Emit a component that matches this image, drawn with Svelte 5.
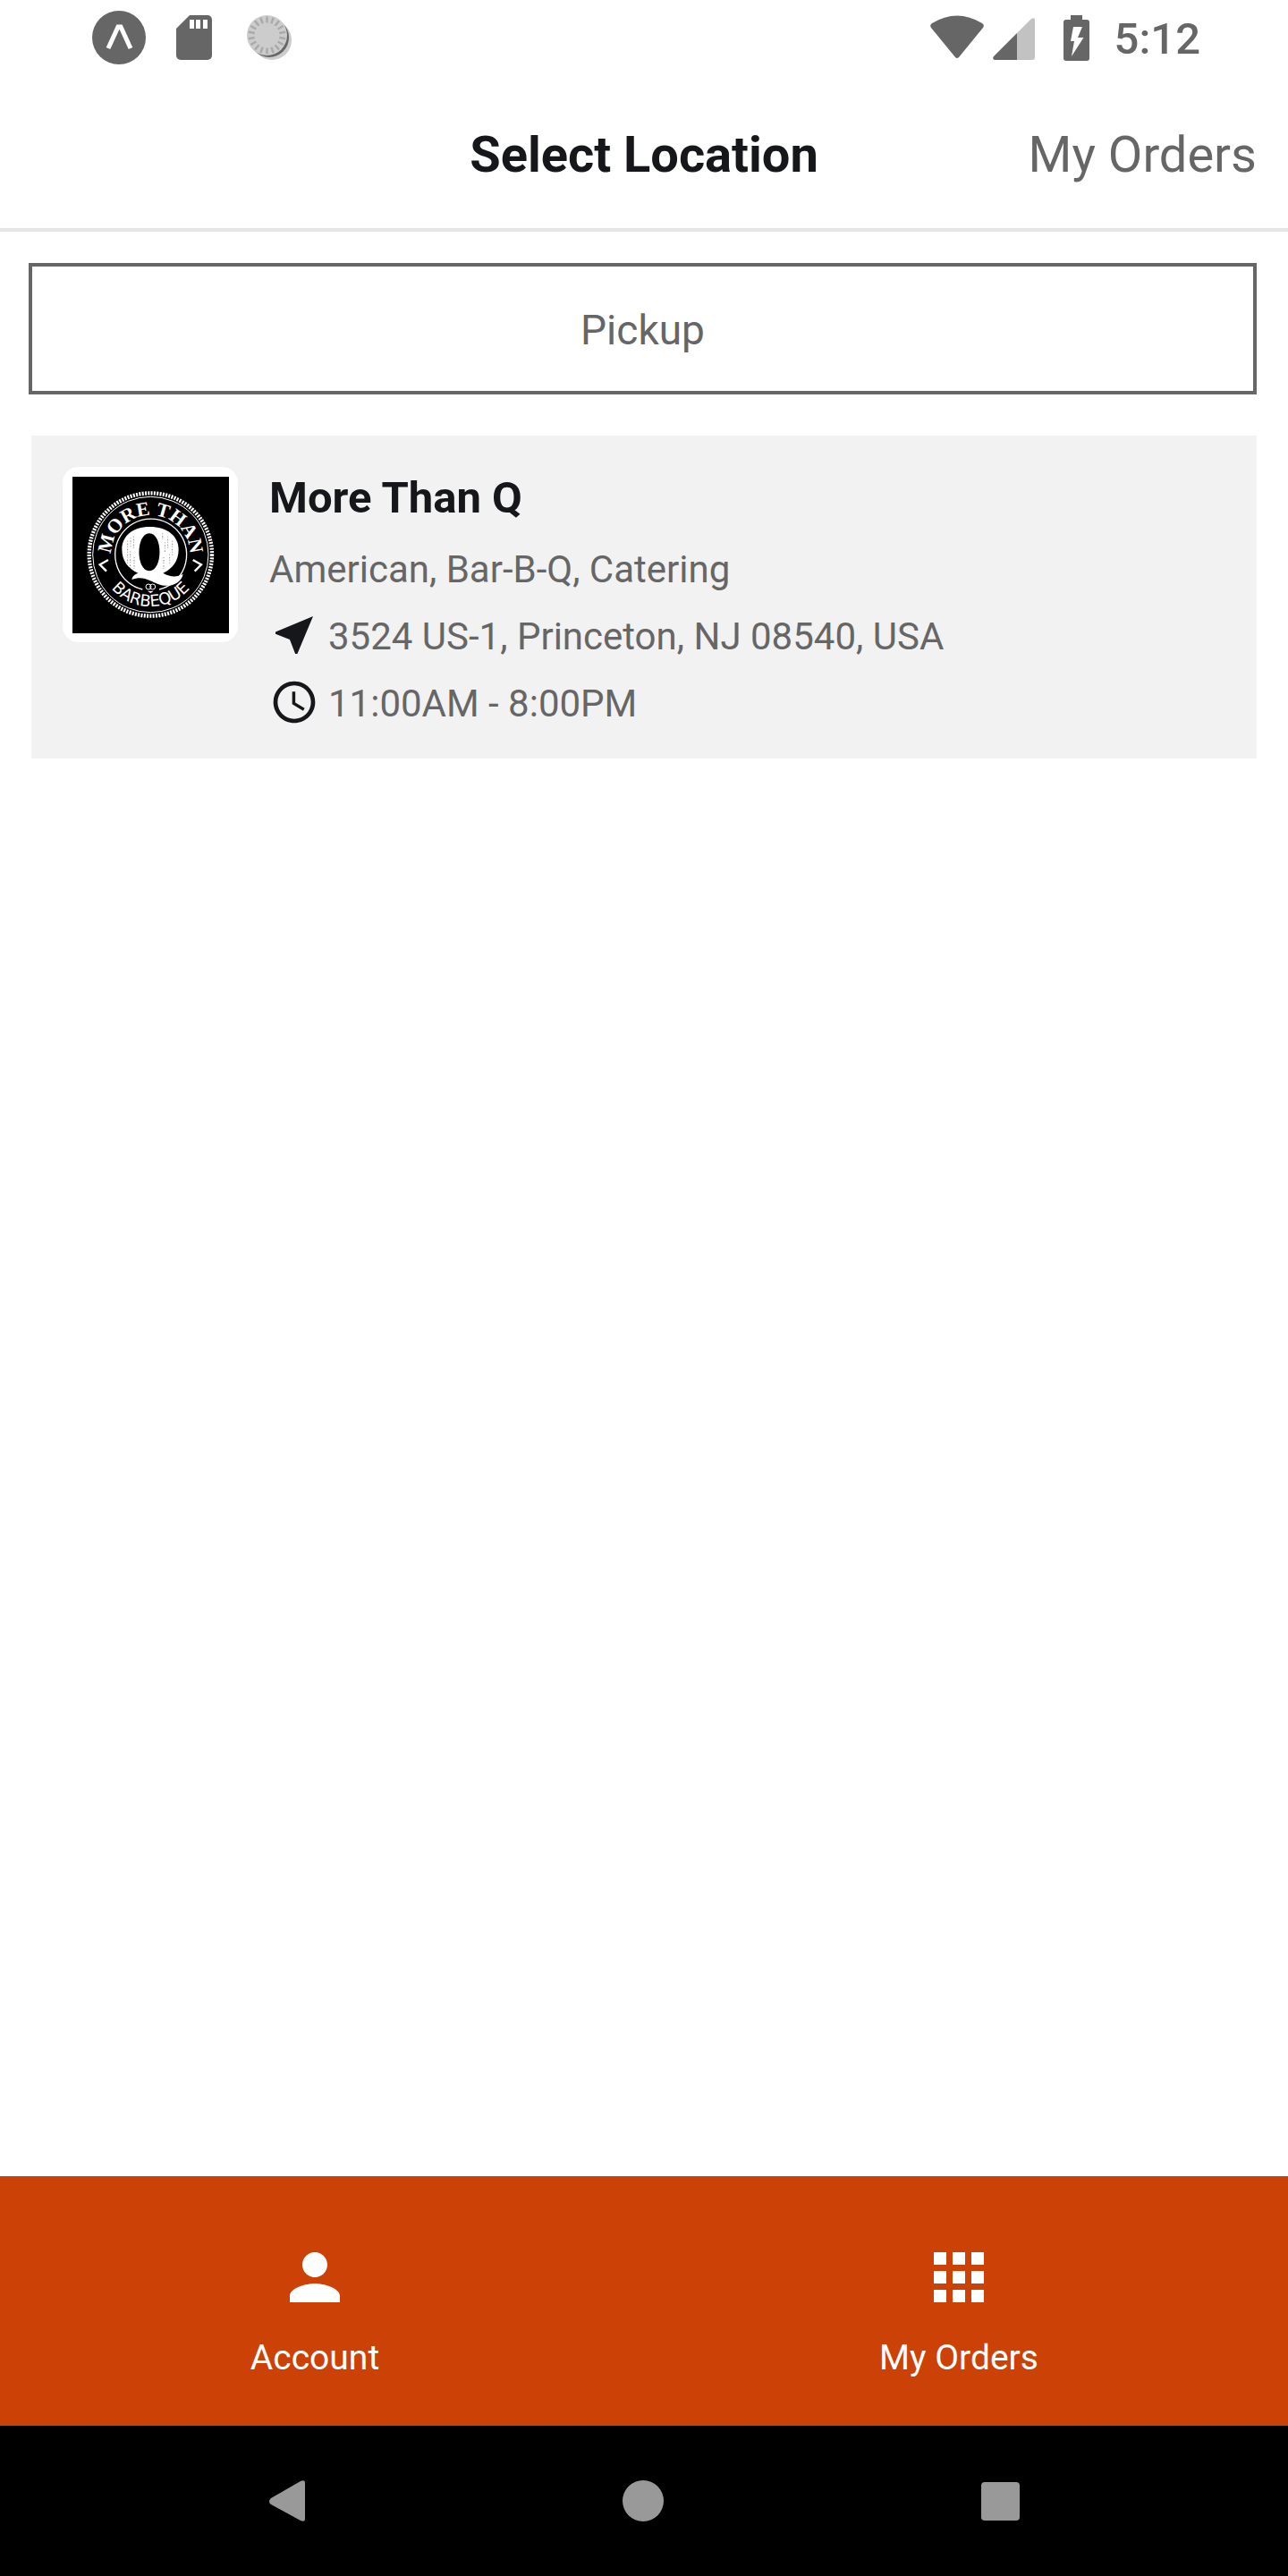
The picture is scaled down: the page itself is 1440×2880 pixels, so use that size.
<script lang="ts">
  interface Tab {
    label: string;
    icon: string;
  }

  const location = {
    name: "More Than Q",
    cuisines: ["American", "Bar-B-Q", "Catering"],
    address: "3524 US-1, Princeton, NJ 08540, USA",
    hours: "11:00AM - 8:00PM",
  };

  const tabs: Tab[] = [
    {
      label: "Account",
      icon: "M12 12c2.2 0 4-1.8 4-4s-1.8-4-4-4-4 1.8-4 4 1.8 4 4 4zm0 2c-2.67 0-8 1.34-8 4v2h16v-2c0-2.66-5.33-4-8-4z",
    },
    {
      label: "My Orders",
      icon: "M4 8h4V4H4zm6 12h4v-4h-4zm-6 0h4v-4H4zm0-6h4v-4H4zm6 0h4v-4h-4zm6-10v4h4V4zm-6 4h4V4h-4zm6 6h4v-4h-4zm0 6h4v-4h-4z",
    },
  ];

  const ticks = Array.from({ length: 18 }, (_, i) => i * 20);
</script>

<div class="screen">
  <div class="status">
    <div class="group">
      <svg width="60" height="60" viewBox="0 0 60 60">
        <circle cx="30" cy="30" r="30" fill="#666" />
        <path d="M18 42L29 18h3L43 42" fill="none" stroke="#fff" stroke-width="5" />
      </svg>
      <svg class="sd" width="40" height="50" viewBox="0 0 40 50">
        <path fill="#666" d="M15 0h20a5 5 0 0 1 5 5v40a5 5 0 0 1-5 5H5a5 5 0 0 1-5-5V15z" />
        <path fill="#fff" d="M15 5h5v10h-5zM22 5h5v10h-5zM30 5h5v10h-5z" />
      </svg>
      <svg width="50" height="50" viewBox="0 0 50 50">
        <circle cx="28" cy="28" r="22" fill="#ccc" />
        <circle cx="25" cy="25" r="22" fill="#666" />
        <circle cx="22.5" cy="22.5" r="22.5" fill="#ccc" />
        {#each ticks as angle}
          <path
            d="M22.5 1.5v7"
            stroke="#aaa"
            stroke-width="2.5"
            transform="rotate({angle} 22.5 22.5)"
          />
        {/each}
      </svg>
    </div>
    <div class="group">
      <svg width="60" height="50" viewBox="0 0 60 50">
        <path fill="#666" d="M2 9Q30-8 58 9q3 2 1 5L32 47q-2 2-4 0L1 14q-2-3 1-5z" />
      </svg>
      <svg class="signal" width="47" height="50" viewBox="0 0 47 50">
        <path fill="#c2c2c2" d="M27 20L43 4q4-2 4 1v42q0 3-3 3H27z" />
        <path fill="#666" d="M27 20v30H2q-3-1-1-4z" />
      </svg>
      <svg class="battery" width="29" height="51" viewBox="0 0 29 51">
        <path fill="#666" d="M8 0h13v5h5q3 0 3 3v40q0 3-3 3H3q-3 0-3-3V8q0-3 3-3h5z" />
        <path fill="#fff" d="M11 13h10l-5 12h6.5L9 46l3-17H8z" />
      </svg>
      <time>5:12</time>
    </div>
  </div>

  <header>
    <h1>Select Location</h1>
    <a href="#orders">My Orders</a>
  </header>

  <main>
    <button class="pickup">Pickup</button>

    <article>
      <div class="logo">
        <svg viewBox="0 0 525 525" role="img" aria-label={location.name}>
          <defs>
            <path id="arc-top" d="M130 261a132 132 0 0 1 264 0" />
            <path id="arc-bottom" d="M88 261a174 174 0 0 0 348 0" />
          </defs>
          <rect width="525" height="525" fill="#000" />
          <g fill="none" stroke="#fff">
            <circle cx="262" cy="261" r="206" stroke-width="13" stroke-dasharray="6 4" />
            <circle cx="262" cy="261" r="194" stroke-width="3" />
            <path d="M235 378a120 120 0 1 1 56 0" stroke-width="4" />
            <path d="M120 279l-28 16 22 22M404 279l28 16-22 22" stroke-width="7" />
            <circle cx="255" cy="369" r="9" stroke-width="3" />
            <circle cx="269" cy="369" r="9" stroke-width="3" />
          </g>
          <path fill="#fff" d="M252 383h20l-10 8z" />
          <path
            fill="#fff"
            fill-rule="evenodd"
            d="M259 168c58 0 97 30 97 76 0 38-20 65-52 79 25 14 45 15 67 3-5 29-42 49-82 35-26-9-50-31-90-16 2-12 11-18 21-22-33-13-54-42-54-79 0-46 37-76 93-76zm-1 22c-46 0-46 126 0 126s46-126 0-126z"
          />
          <path
            d="M185 215v75M195 205v30M194 250v55M205 200v45M207 270v38M302 190v20M310 220v32M306 270v38M320 200v40M326 260v30M335 215v48"
            stroke="#555"
            stroke-width="2"
            stroke-dasharray="3 6 5 4"
          />
          <text class="arc-name">
            <textPath href="#arc-top" startOffset="50%" text-anchor="middle">MORE THAN</textPath>
          </text>
          <text class="arc-kind">
            <textPath href="#arc-bottom" startOffset="50%" text-anchor="middle">BARBEQUE</textPath>
          </text>
        </svg>
      </div>

      <div class="details">
        <h2>{location.name}</h2>
        <p>{location.cuisines.join(", ")}</p>
        <p>
          <svg width="56" height="56" viewBox="0 0 24 24">
            <path d="M21 3L3 10.53v.98l6.84 2.65L12.48 21h.98z" />
          </svg>
          {location.address}
        </p>
        <p>
          <svg width="56" height="56" viewBox="0 0 24 24">
            <path
              d="M11.99 2C6.47 2 2 6.48 2 12s4.47 10 9.99 10C17.52 22 22 17.52 22 12S17.52 2 11.99 2zM12 20c-4.42 0-8-3.58-8-8s3.58-8 8-8 8 3.58 8 8-3.58 8-8 8zm.5-13H11v6l5.25 3.15.75-1.23-4.5-2.67z"
            />
          </svg>
          {location.hours}
        </p>
      </div>
    </article>
  </main>

  <nav class="tabs">
    {#each tabs as tab}
      <button>
        <svg width="84" height="84" viewBox="0 0 24 24"><path d={tab.icon} /></svg>
        {tab.label}
      </button>
    {/each}
  </nav>

  <div class="system">
    <button aria-label="Back">
      <svg width="48" height="48" viewBox="0 0 48 48">
        <path d="M8 21L41 2q5-2 5 2v40q0 4-5 2L8 28q-4-3 0-7z" />
      </svg>
    </button>
    <button aria-label="Home">
      <svg width="48" height="48" viewBox="0 0 48 48"><circle cx="24" cy="24" r="23" /></svg>
    </button>
    <button aria-label="Recent apps">
      <svg width="48" height="48" viewBox="0 0 48 48">
        <rect x="2" y="3" width="43" height="43" rx="4" />
      </svg>
    </button>
  </div>
</div>

<style>
  :global(body) {
    margin: 0;
  }
  .screen {
    display: flex;
    flex-direction: column;
    min-height: 100vh;
    background: #fff;
    color: #666;
    font-family: Roboto, "Liberation Sans", sans-serif;
  }
  svg {
    display: block;
    flex: none;
  }
  h1,
  h2,
  p {
    margin: 0;
  }
  h1,
  h2 {
    color: #16171b;
    font-weight: 700;
  }
  button {
    border: none;
    background: none;
    color: inherit;
    font-family: inherit;
    cursor: pointer;
  }
  .status {
    display: flex;
    justify-content: space-between;
    align-items: center;
    height: 84px;
    padding: 0 98px 0 103px;
  }
  .group {
    display: flex;
    align-items: center;
  }
  .sd {
    margin: 0 39px 0 34px;
  }
  .signal {
    margin: 0 32px 0 10px;
  }
  .battery {
    margin-right: 28px;
  }
  time {
    font-size: 49px;
    font-weight: 500;
    line-height: 56px;
    padding-top: 4px;
  }
  header {
    display: grid;
    grid-template-columns: 1fr auto 1fr;
    align-items: center;
    padding: 56px 35px 49px;
    border-bottom: 4px solid #e5e5e5;
    font-size: 56px;
    line-height: 66px;
  }
  header h1 {
    grid-column: 2;
    font-size: 56px;
  }
  header a {
    justify-self: end;
    color: inherit;
    text-decoration: none;
  }
  main {
    flex: 1;
    padding: 35px 35px 35px 32px;
  }
  .pickup {
    display: block;
    width: 100%;
    padding: 43px 0 40px;
    border: 4px solid #666;
    font-size: 46px;
    line-height: 56px;
  }
  article {
    display: flex;
    gap: 35px;
    margin: 46px 0 0 3px;
    padding: 35px 35px 24px;
    background: #f2f2f2;
  }
  .logo {
    box-sizing: border-box;
    flex: none;
    width: 196px;
    height: 196px;
    padding: 11px 10px 10px 11px;
    border-radius: 18px;
    background: #fff;
  }
  .arc-name {
    fill: #fff;
    font: 700 66px "Liberation Serif", serif;
  }
  .arc-kind {
    fill: #fff;
    font: 54px "DejaVu Sans", sans-serif;
  }
  .details {
    min-width: 0;
  }
  .details h2 {
    margin-bottom: 7px;
    font-size: 49px;
    line-height: 70px;
  }
  .details p {
    display: flex;
    align-items: center;
    gap: 10px;
    font-size: 42px;
    line-height: 75px;
  }
  .details svg {
    margin-bottom: 4px;
    fill: #16171b;
  }
  .tabs {
    display: flex;
    background: #cc4106;
  }
  .tabs button {
    display: flex;
    flex: 1;
    flex-direction: column;
    align-items: center;
    gap: 24px;
    padding: 71px 16px 52px 0;
    color: #fff;
    font-size: 39px;
    line-height: 48px;
  }
  .tabs svg {
    fill: #fff;
  }
  .system {
    display: flex;
    justify-content: center;
    gap: 316px;
    height: 168px;
    padding-right: 2px;
    background: #000;
  }
  .system button {
    display: flex;
    align-items: center;
    justify-content: center;
    width: 84px;
    padding: 0;
  }
  .system svg {
    fill: #999;
  }
</style>
